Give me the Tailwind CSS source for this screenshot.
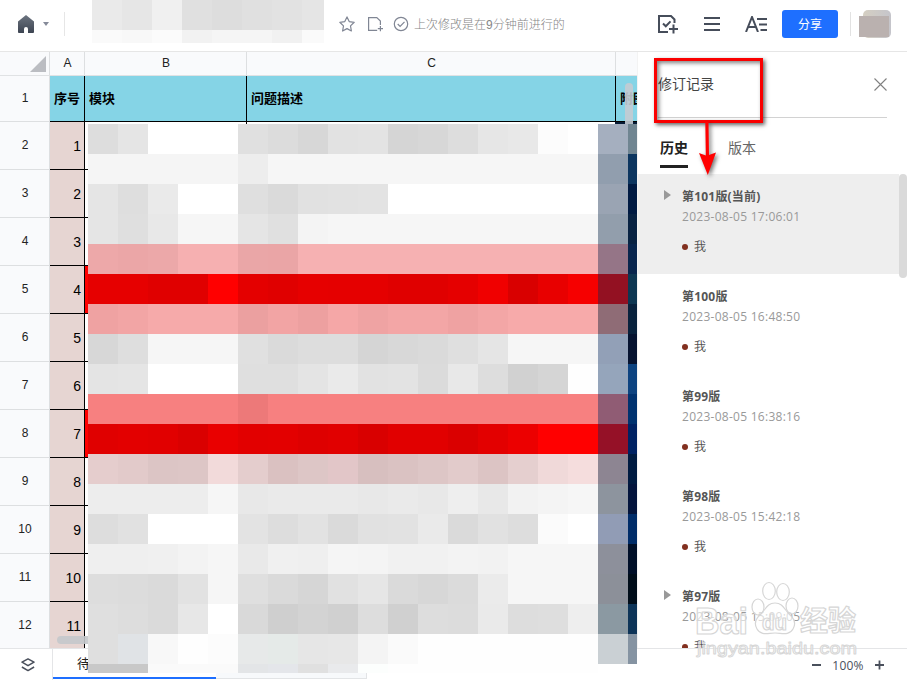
<!DOCTYPE html>
<html lang="zh-CN">
<head>
<meta charset="utf-8">
<title>修订记录</title>
<script src="https://cdn.jsdelivr.net/npm/@tailwindcss/browser@4"></script>
</head>
<body class="bg-white">
<div class="relative flex h-[680px] w-[907px] flex-col overflow-hidden bg-white font-['Liberation_Sans','Noto_Sans_CJK_SC',sans-serif] text-[#222]">

  <!-- Top bar -->
  <header class="flex h-[52px] shrink-0 border-b border-[#e6e6e6] pb-[3px]">
    <div class="flex w-[92px] items-center pl-[18px]">
      <svg class="h-[18px] w-4" viewBox="0 0 16 18"><defs><linearGradient id="h" x1="0" y1="0" x2="0" y2="1"><stop offset="0" stop-color="#6c7480"/><stop offset="1" stop-color="#3d4552"/></linearGradient></defs><path fill="url(#h)" d="M8 0 L0 6.6V17a.9.9 0 0 0 .9.9H6V14a2 2 0 0 1 4 0v3.9h5.1A.9.9 0 0 0 16 17V6.6Z"/></svg>
      <svg class="ml-[9px] h-1 w-[6px]" viewBox="0 0 6 4"><path fill="#858a99" d="M0 0h6L3 4z"/></svg>
      <div class="ml-[15px] h-6 w-px bg-[#e6e6e6]"></div>
    </div>
    <div id="titleBlocks" class="grid h-[43px] w-[232px] shrink-0 grid-cols-[repeat(7,30px)_22px] grid-rows-[30px_13px]"></div>
    <div class="flex flex-1 items-center pl-[15px]">
      <svg class="h-4 w-4" viewBox="0 0 16 16" fill="none" stroke="#808694" stroke-width="1.2" stroke-linejoin="round"><path d="M8 .9l2.2 4.7 5 .7-3.7 3.6.9 5.1L8 12.6 3.6 15l.9-5.1L.8 6.3l5-.7z"/></svg>
      <svg class="ml-[12px] h-4 w-4" viewBox="0 0 16 16" fill="none" stroke="#808694" stroke-width="1.2"><path d="M10.2 14.4H1.6V1.6h8.2l3.6 3.4V9M13.4 10v5.2M10.8 12.6H16"/></svg>
      <svg class="ml-[10px] h-4 w-4" viewBox="0 0 16 16" fill="none" stroke="#808694" stroke-width="1.2"><circle cx="8" cy="8" r="6.7"/><path d="M4.7 8l2.4 2.5 4.4-4.7"/></svg>
      <span class="ml-[5px] pt-[2px] text-[12px] leading-[16px] font-light whitespace-nowrap text-[#858585]">上次修改是在9分钟前进行的</span>
    </div>
    <div class="flex items-center pr-4">
      <svg class="h-5 w-5" viewBox="0 0 20 20" fill="none" stroke="#464d5a" stroke-width="2"><path d="M10 18H1V2h12l3.5 3.5V9M5 9.5l2.8 2.8 4.7-4.9M15.5 10.5v9M11 15h9"/></svg>
      <svg class="ml-[26px] h-4 w-4" viewBox="0 0 16 16" stroke="#464d5a" stroke-width="2"><path d="M0 2h16M0 8h16M0 14h16"/></svg>
      <svg class="ml-[25px] h-4 w-[22px]" viewBox="0 0 22 16" fill="none" stroke="#464d5a" stroke-width="2"><path d="M1 16L7 1l6 15M3 11h8M12 3h10M14 8.5h8M15.5 14H22"/></svg>
      <div class="ml-[15px] flex h-7 w-14 items-center justify-center rounded-[3px] bg-[#1e6fff] pt-px text-[12px] text-white">分享</div>
      <div class="ml-3 h-6 w-px bg-[#e2e2e2]"></div>
      <div class="relative ml-[8px] h-7 w-8 pl-1">
        <div class="h-7 w-7 rounded-[5px] bg-linear-to-r from-[#d5cfc2] to-[#c5c5cb]"></div>
        <div class="absolute top-[6px] left-0 h-[21px] w-[30px] bg-[#bab1af]"></div>
      </div>
    </div>
  </header>

  <div class="flex h-[596px] shrink-0">
    <!-- Spreadsheet -->
    <main class="relative h-[596px] w-[637px] shrink-0 overflow-hidden bg-white">
      <div class="flex h-6 border-b border-[#e0e2e4] bg-[#f9fafc] text-center text-[12px] leading-[22px]">
        <div class="flex w-[50px] items-end justify-end border-r border-[#dddfe1] pr-[3px] pb-[3px]"><svg class="h-4 w-4" viewBox="0 0 16 16"><path fill="#bbbdc2" d="M16 0v16H0z"/></svg></div>
        <div class="w-[35px] border-r border-[#dddfe1] pl-px">A</div>
        <div class="w-[162px] border-r border-[#dddfe1] pl-px">B</div>
        <div class="w-[369px] border-r border-[#dddfe1] pl-px">C</div>
        <div class="w-[21px]"></div>
      </div>
      <div class="flex h-[46px] text-[13px] font-bold text-black">
        <div class="flex w-[50px] items-center justify-center border-r border-b border-[#dddfe1] bg-[#f9fafc] pb-px pl-px text-[12px] font-normal text-[#222]">1</div>
        <div class="flex w-[35px] items-center border-r border-b border-black bg-[#85d4e6] pt-px pl-1 whitespace-nowrap">序号</div>
        <div class="flex w-[162px] items-center border-r border-b border-black bg-[#85d4e6] pt-px pl-1">模块</div>
        <div class="flex w-[369px] items-center border-r border-b border-black bg-[#85d4e6] pt-px pl-1">问题描述</div>
        <div class="flex w-[21px] items-center overflow-hidden border-b border-black bg-[#85d4e6] pt-px pl-1 whitespace-nowrap">附图</div>
      </div>
      <div class="flex">
        <div id="rows" class="w-[88px]"></div>
        <div class="flex h-[2px] flex-1"><div class="w-[159px] border-r border-black"></div><div class="w-[368px]"></div><div class="flex-1 bg-[#061a35]"></div></div>
      </div>
      <div class="absolute top-[31px] left-[625px] h-[41px] w-2 rounded-t bg-[#c4cbd1]/90"></div>
      <div class="absolute top-[584px] left-[57px] h-2 w-12 rounded bg-[#c4c8cb]/90"></div>
    </main>

    <!-- Revision panel -->
    <aside class="h-[596px] flex-1 overflow-hidden border-l border-[#f3f3f3] bg-white pt-px">
      <div class="mx-5 flex h-[65px] items-center justify-between border-b border-[#d2d2d2] text-[14px] text-[#444]">
        <span class="-mt-[2px]">修订记录</span>
        <svg class="-mt-[2px] h-[13px] w-[13px]" viewBox="0 0 13 13" stroke="#808080" stroke-width="1.1"><path d="M.5.5l12 12M12.5.5l-12 12"/></svg>
      </div>
      <div class="flex h-14 gap-10 pl-[22px] text-[14px] leading-[21px]">
        <div class="mt-[19px] h-[31px] border-b-[3px] border-[#222] pt-px font-bold text-[#222]">历史</div>
        <div class="mt-[20px] text-[#666]">版本</div>
      </div>
      <div class="flex font-['Open_Sans','Noto_Sans_CJK_SC',sans-serif]">
        <div id="versions" class="w-[261px] shrink-0"></div>
        <div class="h-[104px] w-2 rounded-full bg-[#dadada]"></div>
      </div>
    </aside>
  </div>

  <!-- Bottom bar -->
  <footer class="flex h-8 border-t border-[#e4e5e7]">
    <div class="flex w-[53px] justify-center border-r border-[#e4e5e7] pt-[9px] pl-1">
      <svg class="h-[14px] w-[14px]" viewBox="0 0 14 14" fill="none" stroke="#4a505c" stroke-width="1.5" stroke-linejoin="round"><path d="M7 .9l6 3.3-6 3.5-6-3.5zM.9 9L7 12.6 13.1 9"/></svg>
    </div>
    <div class="h-[30px] w-[163px] border-b-2 border-[#1e6fff] pl-6 text-[13px] leading-[30px]">待</div>
    <div class="h-[30px] w-[151px] border-r border-b border-[#e2e4e6] bg-[#f7f9fb]"></div>
    <div class="flex h-8 flex-1 items-center justify-end pr-[23px] text-[12px] text-[#4a505c]">
      <svg class="h-[10px] w-[9px]" viewBox="0 0 9 10" stroke="#4a505c" stroke-width="2"><path d="M0 5h9"/></svg>
      <span class="w-[54px] pt-px text-center font-['Open_Sans','Noto_Sans',sans-serif] tracking-[0.2px]">100%</span>
      <svg class="h-[10px] w-[9px]" viewBox="0 0 9 10" stroke="#4a505c" stroke-width="1.8"><path d="M0 5h9M4.5 .5v9"/></svg>
    </div>
  </footer>

  <!-- Censor mosaic over the sheet -->
  <div id="mosaic" class="absolute top-[124px] left-[88px] grid w-[549px] grid-cols-[repeat(18,30px)_9px] grid-rows-[repeat(18,30px)_9px]"></div>

  <!-- Callout box and arrow -->
  <div class="absolute top-[58px] left-[654px] h-[65px] w-[109px] border-[3px] border-[#fa0000] shadow-[2px_2px_4px_rgba(0,0,0,0.6),inset_2px_2px_4px_rgba(0,0,0,0.5)]"></div>
  <svg class="absolute top-[120px] left-[690px] h-[62px] w-10 drop-shadow-[2px_2px_2px_rgba(0,0,0,0.55)]" viewBox="0 0 40 62"><path fill="#ff0000" d="M15.3 2h3.2l.5 33 7-2.5L17.8 55 9 33l6.8 2.5z"/></svg>

  <!-- Watermark -->
  <svg class="absolute top-[575px] left-[685px] h-[90px] w-[185px]" viewBox="0 0 185 90" fill="#fff" fill-opacity=".65" stroke="#d6d6d6" stroke-width="1.2" stroke-linejoin="round" font-family="Liberation Sans, Noto Sans CJK SC, sans-serif" font-weight="bold">
    <ellipse cx="73" cy="32" rx="6" ry="8"/><ellipse cx="84" cy="16" rx="6.3" ry="8.5"/><ellipse cx="98" cy="17" rx="6.3" ry="8.5"/><ellipse cx="107" cy="31" rx="6" ry="8"/>
    <path d="M90 28c8 0 9 6 14 11 6 5 7 10 4 15-4 7-11 4-18 4s-14 3-18-4c-3-5-2-10 4-15 5-5 6-11 14-11z"/>
    <text x="10" y="59" font-size="37" textLength="53" lengthAdjust="spacingAndGlyphs">Bai</text>
    <text x="77" y="55" font-size="22" textLength="25" lengthAdjust="spacingAndGlyphs">du</text>
    <text x="115" y="56" font-size="28" textLength="56">经验</text>
    <text x="12" y="79" font-size="17" font-weight="normal" stroke-width=".9" textLength="160" lengthAdjust="spacingAndGlyphs">jingyan.baidu.com</text>
  </svg>
</div>

<script>
  // "value*n" repeats a swatch n times; two-digit values are greys.
  function paint(id, rows) {
    var html = '';
    rows.forEach(function (row) {
      row.split(' ').forEach(function (t) {
        var p = t.split('*'), v = p[0], n = +(p[1] || 1);
        var c = v === '--' ? 'transparent' : '#' + (v.length === 2 ? v + v + v : v);
        while (n--) html += '<div style="background:' + c + '"></div>';
      });
    });
    document.getElementById(id).innerHTML = html;
  }
  paint('titleBlocks', ['ea e6 f0 e0 dd e0 e2 e5', 'fa f8 fb f2 f5 f5 f1 fa']);
  paint('mosaic', [
    'dd e5 ff*3 e0 dc d7 e2 e3 d5 d7 dd e6 e8 fc ff a5afbf 708591',
    'f5*5 ed f6*11 919eae 0c355f',
    'e5 de ea ff*2 df da e1 e2 e3 ff*7 9aa4b3 001a42',
    'e5 df e8 f6*2 e5 e0 f4 f6*9 929eac 082242',
    'eda8a9 eba6a7 eca8a9 f6b0b1*2 eaa6a7 eaa5a6 f6b1b2*10 957587 08254d',
    'e60000*2 e00000*2 ff0000 e40000 e00000 e60000 e50000*2 e00000*2 e50000 f00000 d90000 e80000 f60000 931122 0e3752',
    'efa2a2 f2a5a5 f6aaaa*3 eba0a0 f2a4a4 eda0a0 f5a7a7 efa3a3 f3a6a6*2 efa2a2 f3a6a6 f7aaaa*3 8f6c76 08223d',
    'd7 de f6*3 e0 da dd dd d5 d8 da df e5 f6*3 92a0b7 061330',
    'e4 e5 ff*3 df df e4 ea e2 e3 db e8 dd d1 d5 fe 95a5bb 0d4380',
    'f78080*5 ed7979 f78080*11 905c74 00326f',
    'e00000 e30000 e10000 da0000 e90000 e20000 e30000 de0000 e10000 d90000 e10000*2 da0000 e30000 ec0000 ff0000*2 951127 002263',
    'e5cdcd e2caca dcc5c5 ddc6c6 f2dada e4cdcd dac1c1 ddc6c6 e2c6c8 d7bfbf dac2c2 ddc6c6 e2cbcb dcc4c4 e5cfcf f0d9d9 f5dddd 8d8592 001b41',
    'ed*4 f6 e8 ea*3 e8 ea e8 ee e8 f2 f4 f6 8d949e 03143c',
    'dd e1 ff*3 e3 dd e2 da e1 e2 ea da e1 dd fb ff 919cb5 002c68',
    'ef*2 f0 f3 f6 e9 f0 ef f5 f4 f1*2 f3 f2 f6*3 8d909b 000f28',
    'dd dc da e2 f6 df da d6 e1 e6 da d7 db eb f6*3 8c9099 000d19',
    'df dd da e7 ff d9 cf d3 d0 dd d0 dd dc ea dd de ee 8b99a2 0d3458',
    'df e0e3e6 f8 fe fc e7e9e9 e5eae8 e6 e7 f4 fa fe*6 cad0d4 8593a2',
    'c8*2 fa*3 e3e5e7 e4e6ea e0 e9eaec fcfefd fe*7 --*2'
  ]);

  var rows = '';
  for (var i = 1; i <= 11; i++) {
    var red = i === 4 || i === 7;
    rows += '<div class="flex h-12">' +
      '<div class="flex w-[50px] items-center justify-center border-r border-b border-[#dddfe1] bg-[#f9fafc] pb-px pl-px text-[12px]">' + (i + 1) + '</div>' +
      '<div class="flex w-[35px] items-center justify-end border-r border-b border-black bg-[#e6d5d2] pt-[2px] pr-[3px] text-[14px] text-black">' + i + '</div>' +
      '<div class="w-[3px] border-b border-black ' + (red ? 'bg-[#ff0000]' : 'bg-white') + '"></div></div>';
  }
  document.getElementById('rows').innerHTML = rows;

  var list = [['第101版(当前)', '17:06:01', 1], ['第100版', '16:48:50'], ['第99版', '16:38:16'], ['第98版', '15:42:18'], ['第97版', '15:09:05', 1]];
  document.getElementById('versions').innerHTML = list.map(function (v, k) {
    return '<div class="flex h-[100px] pt-[13px] ' + (k === 0 ? 'bg-[#eeeeee]' : '') + '">' +
      '<div class="w-11 pt-[3px] pl-[26px]">' + (v[2] ? '<svg class="h-[10px] w-[7px]" viewBox="0 0 7 10"><path fill="#999" d="M0 0l7 5-7 5z"/></svg>' : '') + '</div>' +
      '<div>' +
      '<div class="h-5 text-[12px] leading-5 font-bold tracking-[0.2px] whitespace-nowrap text-[#555]">' + v[0] + '</div>' +
      '<div class="h-5 text-[12px] leading-5 tracking-[0.27px] whitespace-nowrap text-[#999]">2023-08-05 ' + v[1] + '</div>' +
      '<div class="mt-[10px] flex h-5 items-center gap-[6px] text-[12px] text-[#555]"><span class="h-[6px] w-[6px] rounded-full bg-[#82301f]"></span>我</div>' +
      '</div></div>';
  }).join('');
</script>
</body>
</html>
